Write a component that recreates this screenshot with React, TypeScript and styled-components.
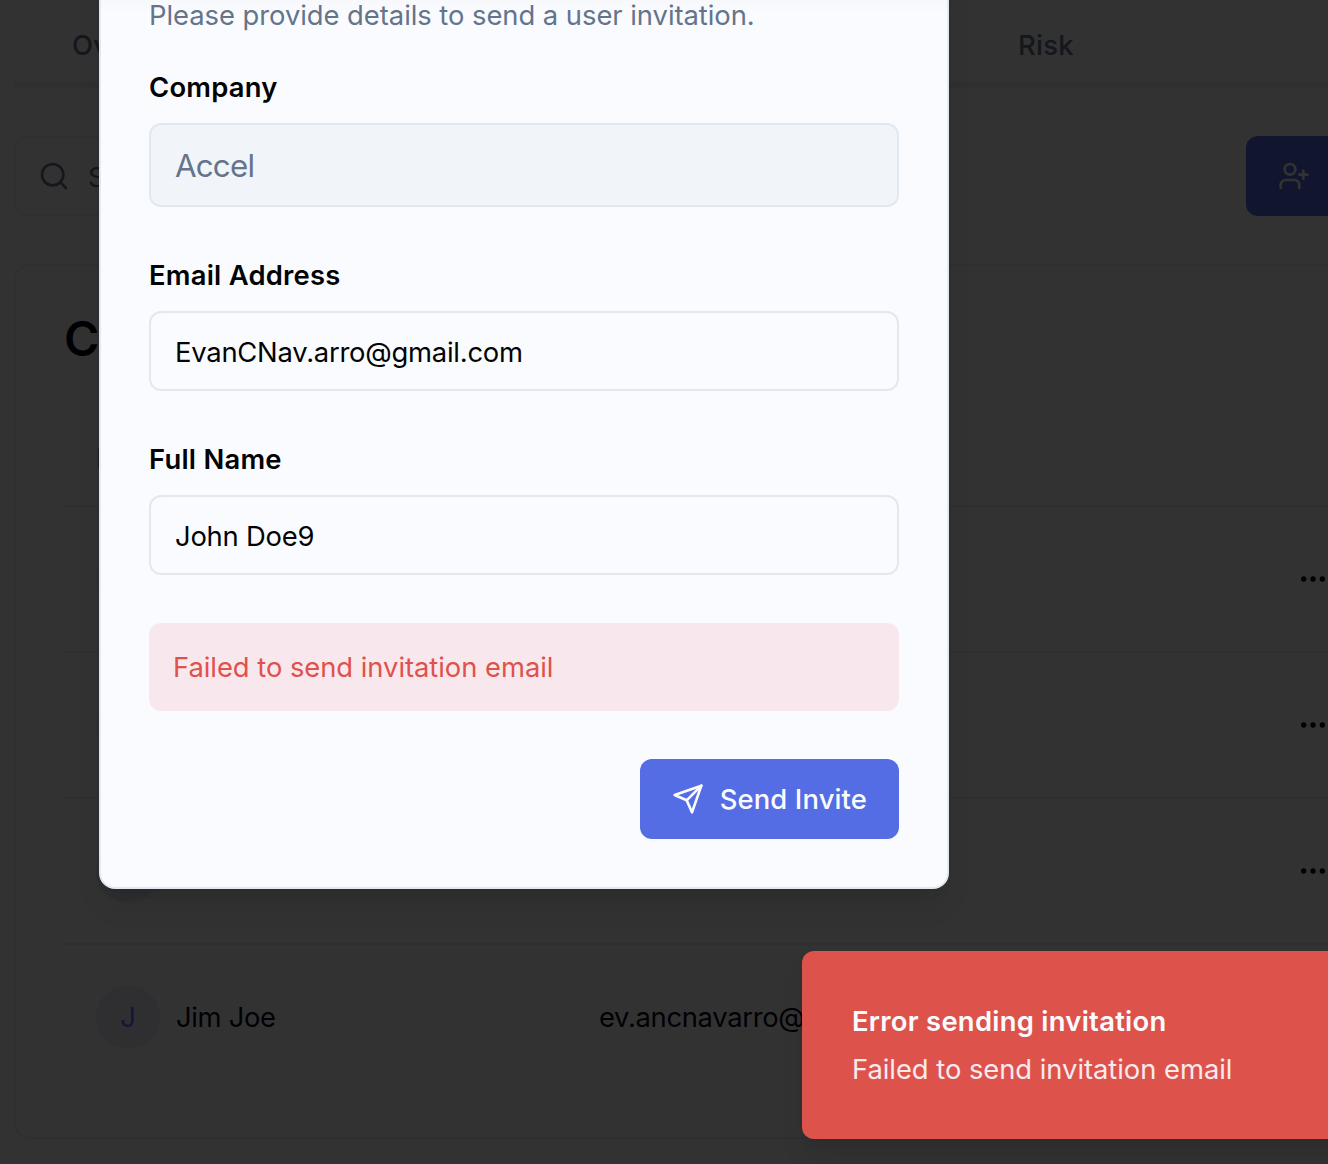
import React from "react";
import styled, { createGlobalStyle } from "styled-components";

const Global = createGlobalStyle`
  * { box-sizing: border-box; }
  body { margin: 0; overflow: hidden; background: #f7f8f9; }
  button, input { font: inherit; letter-spacing: inherit; }
  svg { flex: none; }
`;

const Screen = styled.div`
  position: relative;
  width: 1328px;
  height: 1164px;
  overflow: hidden;
  background: #f7f8f9;
  color: #020817;
  font-family: Inter, "Liberation Sans", sans-serif;
  font-size: 27.4px;
  line-height: 40px;
  letter-spacing: -0.05px;
`;

const Page = styled.main`
  width: 1900px;
  padding: 24px 0 0 14px;
`;

const Tabs = styled.nav`
  display: grid;
  grid-template-columns: 946px 1fr;
  height: 64px;
  padding: 1px 0 0 58px;
  border-bottom: 6px solid #ebebee;
  color: #64748b;
  font-weight: 500;
  letter-spacing: 0.3px;
`;

const Toolbar = styled.div`
  display: flex;
  gap: 532px;
  margin: 48px 0;
`;

const SearchBox = styled.div`
  display: flex;
  align-items: center;
  gap: 18px;
  width: 700px;
  height: 80px;
  padding: 0 22px;
  border: 2px solid #e8eaee;
  border-radius: 12px;
  background: #fafafb;
  color: #64748b;
`;

const SearchText = styled.span`
  padding-top: 2px;
`;

const AddButton = styled.button`
  display: flex;
  align-items: center;
  width: 300px;
  height: 80px;
  padding: 0 32px;
  border: 0;
  border-radius: 12px;
  background: #546de4;
  color: #fafbff;
`;

const Card = styled.section`
  width: 1500px;
  padding: 48px;
  border: 2px solid #e8eaee;
  border-radius: 16px;
  background: #fafafa;
`;

const CardTitle = styled.h2`
  margin: 0;
  padding-top: 1px;
  font-size: 48px;
  line-height: 48px;
  font-weight: 600;
  letter-spacing: -1.2px;
`;

const columns = "503px 698px 1fr";

const HeadRow = styled.div`
  display: grid;
  grid-template-columns: ${columns};
  align-items: center;
  height: 96px;
  margin-top: 48px;
  border-bottom: 2px solid #e8eaee;
  color: #64748b;
  font-weight: 500;
`;

const Row = styled.div<{ $last?: boolean }>`
  display: grid;
  grid-template-columns: ${columns};
  align-items: center;
  height: ${(p) => (p.$last ? 144 : 146)}px;
  border-bottom: ${(p) => (p.$last ? "0" : "2px solid #e8eaee")};
`;

const Cell = styled.div`
  display: flex;
  align-items: center;
  gap: 16px;
  padding: 0 32px;
  letter-spacing: -0.33px;
`;

const Avatar = styled.div`
  display: grid;
  place-items: center;
  width: 64px;
  height: 64px;
  border-radius: 50%;
  background: #e9eaf8;
  color: #5a78ff;
`;

const Overlay = styled.div`
  position: absolute;
  inset: 0;
  background: rgba(0, 0, 0, 0.8);
`;

const Dialog = styled.form`
  position: absolute;
  left: 99px;
  top: -55px;
  width: 850px;
  display: flex;
  flex-direction: column;
  padding: 53px 48px 48px;
  border: 2px solid #e2e8f0;
  border-radius: 16px;
  background: linear-gradient(rgba(0, 0, 0, 0.06), transparent) no-repeat 0 0 / 100% 66px #fafbff;
  box-shadow: 0 20px 30px -6px rgba(0, 0, 0, 0.1), 0 8px 12px -8px rgba(0, 0, 0, 0.1);
  color: #020304;
`;

const Description = styled.p`
  margin: 0 0 37px;
  line-height: 30px;
  color: #64748b;
`;

const Field = styled.div`
  display: flex;
  flex-direction: column;
  gap: 16px;
  margin-bottom: 48px;
`;

const Label = styled.label`
  font-weight: 600;
  letter-spacing: 0.24px;
`;

const Input = styled.input<{ $muted?: boolean }>`
  height: ${(p) => (p.$muted ? 84 : 80)}px;
  padding: 2px 24px 0;
  border: 2px solid #e2e8f0;
  border-radius: 12px;
  outline: 0;
  background: ${(p) => (p.$muted ? "#f1f5f9" : "#fafbff")};
  color: ${(p) => (p.$muted ? "#64748b" : "#020304")};
  font-size: ${(p) => (p.$muted ? 31.3 : 27.4)}px;
  letter-spacing: ${(p) => (p.$muted ? -0.8 : -0.24)}px;
`;

const ErrorBox = styled.div`
  padding: 24px;
  border-radius: 12px;
  background: #f8e8ed;
  color: #de524c;
`;

const Submit = styled.button`
  display: flex;
  align-items: center;
  align-self: flex-end;
  gap: 16px;
  height: 80px;
  margin-top: 48px;
  padding: 0 32px;
  border: 0;
  border-radius: 12px;
  background: #546de4;
  color: #fafbff;
  font-weight: 500;
  letter-spacing: 0.14px;
`;

const Toast = styled.aside`
  position: absolute;
  left: 802px;
  top: 951px;
  width: 760px;
  display: flex;
  flex-direction: column;
  gap: 8px;
  padding: 50px;
  border-radius: 12px;
  background: #de524c;
  box-shadow: 0 20px 30px -6px rgba(0, 0, 0, 0.1), 0 8px 12px -8px rgba(0, 0, 0, 0.1);
  color: #fafbff;
`;

const ToastTitle = styled.strong`
  font-weight: 600;
  letter-spacing: 0.27px;
`;

const ToastText = styled.span`
  opacity: 0.9;
`;

const Icon = ({ children }: { children: React.ReactNode }) => (
  <svg width={32} height={32} viewBox="0 0 24 24" fill="none" stroke="currentColor" strokeWidth={2} strokeLinecap="round" strokeLinejoin="round">
    {children}
  </svg>
);

const Dots = () => (
  <Icon>
    <circle cx="12" cy="12" r="1" />
    <circle cx="19" cy="12" r="1" />
    <circle cx="5" cy="12" r="1" />
  </Icon>
);

const people = [
  { initial: "", name: "", email: "" },
  { initial: "", name: "", email: "" },
  { initial: "", name: "", email: "" },
  { initial: "J", name: "Jim Joe", email: "ev.ancnavarro@" },
];

export default function App() {
  return (
    <Screen>
      <Global />
      <Page>
        <Tabs>
          <span>Ov</span>
          <span>Risk</span>
        </Tabs>
        <Toolbar>
          <SearchBox>
            <Icon>
              <circle cx="11" cy="11" r="8" />
              <path d="m21 21-4.3-4.3" />
            </Icon>
            <SearchText>S</SearchText>
          </SearchBox>
          <AddButton type="button">
            <Icon>
              <path d="M16 21v-2a4 4 0 0 0-4-4H6a4 4 0 0 0-4 4v2" />
              <circle cx="9" cy="7" r="4" />
              <path d="M19 8v6M22 11h-6" />
            </Icon>
          </AddButton>
        </Toolbar>
        <Card>
          <CardTitle>C</CardTitle>
          <HeadRow>
            <Cell>N</Cell>
          </HeadRow>
          {people.map((p, i) => (
            <Row key={i} $last={i === people.length - 1}>
              <Cell>
                <Avatar>{p.initial}</Avatar>
                {p.name}
              </Cell>
              <Cell>{p.email}</Cell>
              <Cell>{i < 3 && <Dots />}</Cell>
            </Row>
          ))}
        </Card>
      </Page>
      <Overlay />
      <Dialog>
        <Description>Please provide details to send a user invitation.</Description>
        <Field>
          <Label>Company</Label>
          <Input $muted readOnly value="Accel" />
        </Field>
        <Field>
          <Label>Email Address</Label>
          <Input readOnly value="EvanCNav.arro@gmail.com" />
        </Field>
        <Field>
          <Label>Full Name</Label>
          <Input readOnly value="John Doe9" />
        </Field>
        <ErrorBox>Failed to send invitation email</ErrorBox>
        <Submit type="button">
          <Icon>
            <path d="m22 2-7 20-4-9-9-4Z" />
            <path d="M22 2 11 13" />
          </Icon>
          Send Invite
        </Submit>
      </Dialog>
      <Toast>
        <ToastTitle>Error sending invitation</ToastTitle>
        <ToastText>Failed to send invitation email</ToastText>
      </Toast>
    </Screen>
  );
}
